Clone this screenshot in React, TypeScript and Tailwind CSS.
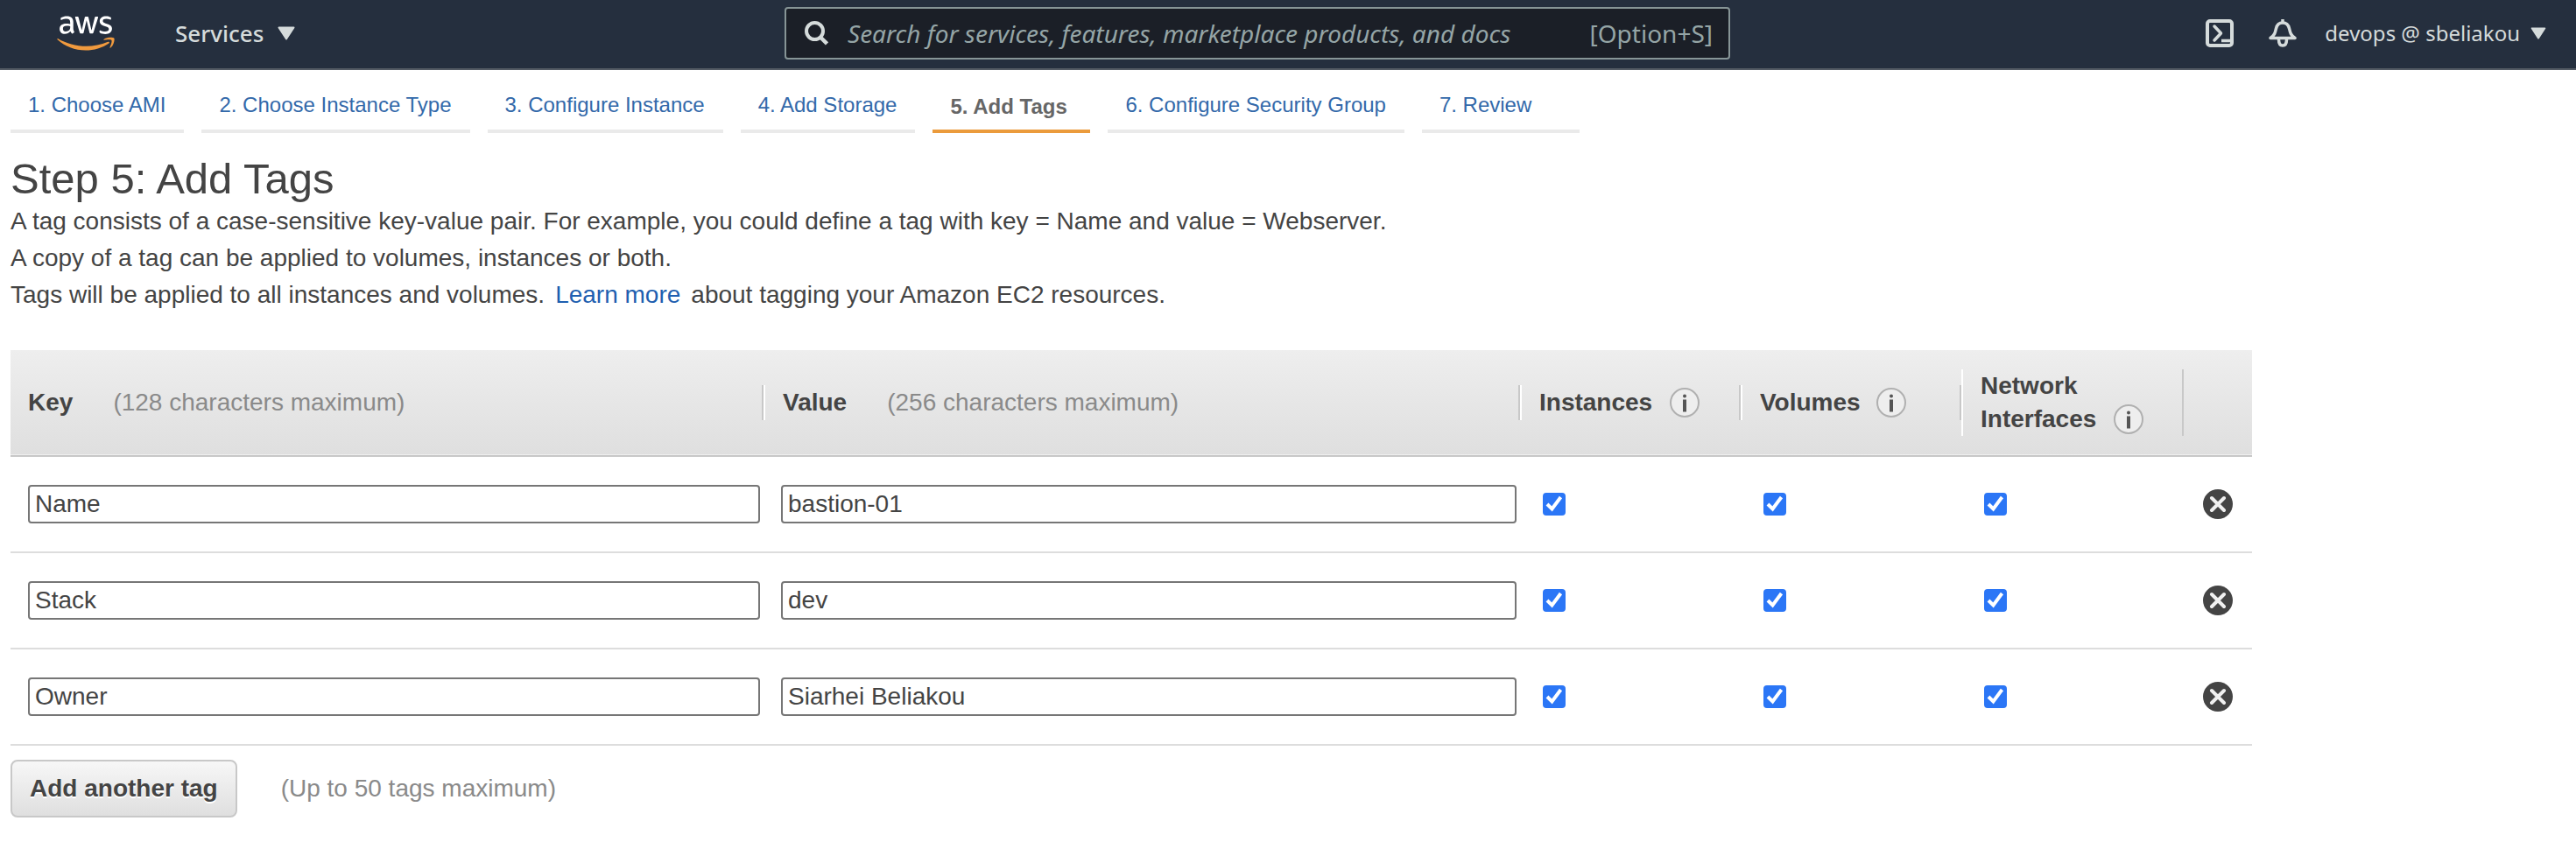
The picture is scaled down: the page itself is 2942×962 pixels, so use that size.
import React from "react";

type Tag = { key: string; value: string };

const steps = [
  "1. Choose AMI",
  "2. Choose Instance Type",
  "3. Configure Instance",
  "4. Add Storage",
  "5. Add Tags",
  "6. Configure Security Group",
  "7. Review",
];
const currentStep = 4;

const tags: Tag[] = [
  { key: "Name", value: "bastion-01" },
  { key: "Stack", value: "dev" },
  { key: "Owner", value: "Siarhei Beliakou" },
];

const targets = ["Instances", "Volumes", "Network Interfaces"];

function AwsLogo() {
  return (
    <svg viewBox="0 0 304 182" className="h-10 w-[66px]" aria-hidden="true">
      <path
        fill="#ffffff"
        d="M86.4 66.4c0 3.7.4 6.700 1.100 8.900.8 2.200 1.800 4.600 3.200 7.200.5.8.7 1.600.7 2.300 0 1-.6 2-1.900 3l-6.300 4.200c-.9.6-1.800.9-2.600.9-1 0-2-.5-3-1.400-1.400-1.500-2.600-3.100-3.600-4.700-1-1.700-2-3.600-3.100-5.900-7.800 9.200-17.600 13.800-29.400 13.800-8.400 0-15.100-2.400-20-7.200-4.900-4.800-7.400-11.200-7.400-19.200 0-8.500 3-15.400 9.100-20.600 6.100-5.200 14.200-7.800 24.500-7.800 3.400 0 6.900.3 10.600.8 3.700.5 7.500 1.300 11.500 2.200v-7.300c0-7.600-1.600-12.900-4.700-16-3.200-3.100-8.600-4.600-16.300-4.600-3.500 0-7.100.4-10.800 1.300-3.700.9-7.300 2-10.800 3.400-1.600.7-2.800 1.100-3.500 1.300-.7.2-1.200.3-1.600.3-1.400 0-2.100-1-2.100-3.100v-4.900c0-1.600.2-2.800.7-3.500.5-.7 1.400-1.400 2.800-2.100 3.500-1.800 7.700-3.300 12.600-4.500C41 1.900 46.200 1.300 51.700 1.300c11.900 0 20.600 2.700 26.200 8.100 5.500 5.400 8.300 13.600 8.300 24.600v32.400zM45.800 81.600c3.300 0 6.700-.6 10.300-1.800 3.600-1.200 6.800-3.400 9.500-6.400 1.600-1.900 2.800-4 3.400-6.400.6-2.400 1-5.300 1-8.700v-4.200c-2.900-.7-6-1.300-9.200-1.700-3.200-.4-6.300-.6-9.400-.6-6.700 0-11.600 1.300-14.900 4-3.300 2.700-4.900 6.500-4.900 11.500 0 4.700 1.200 8.200 3.700 10.600 2.400 2.500 5.900 3.700 10.500 3.700zm80.300 10.800c-1.800 0-3-.3-3.800-1-.8-.6-1.500-2-2.100-3.900L96.700 10.200c-.6-2-.9-3.300-.9-4 0-1.600.8-2.500 2.400-2.500h9.800c1.900 0 3.200.3 3.900 1 .8.6 1.400 2 2 3.900l16.800 66.200 15.600-66.200c.5-2 1.100-3.300 1.900-3.900.8-.6 2.200-1 4-1h8c1.900 0 3.200.3 4 1 .8.6 1.500 2 1.900 3.900l15.800 67 17.300-67c.6-2 1.300-3.300 2-3.900.8-.6 2.100-1 3.900-1h9.300c1.600 0 2.500.8 2.500 2.500 0 .5-.1 1-.2 1.600-.1.6-.3 1.400-.7 2.500l-24.100 77.300c-.6 2-1.300 3.300-2.100 3.900-.8.6-2.100 1-3.800 1h-8.600c-1.900 0-3.200-.3-4-1-.8-.7-1.500-2-1.900-4L156 23l-15.400 64.400c-.5 2-1.100 3.300-1.900 4-.8.7-2.200 1-4 1zm128.500 2.700c-5.200 0-10.400-.6-15.400-1.800-5-1.200-8.900-2.500-11.500-4-1.600-.9-2.700-1.900-3.100-2.800-.4-.9-.6-1.900-.6-2.800v-5.100c0-2.100.8-3.100 2.300-3.100.6 0 1.200.1 1.800.3.600.2 1.500.6 2.500 1 3.400 1.500 7.100 2.700 11 3.500 4 .8 7.900 1.200 11.900 1.200 6.300 0 11.200-1.100 14.600-3.300 3.400-2.200 5.200-5.400 5.200-9.500 0-2.800-.9-5.100-2.700-7-1.800-1.900-5.200-3.600-10.100-5.200L246 52c-7.300-2.300-12.700-5.700-16-10.200-3.300-4.400-5-9.300-5-14.500 0-4.200.9-7.900 2.700-11.100 1.800-3.200 4.200-6 7.200-8.200 3-2.300 6.400-4 10.400-5.200 4-1.200 8.200-1.700 12.600-1.700 2.200 0 4.500.1 6.700.4 2.300.3 4.400.7 6.500 1.100 2 .5 3.900 1 5.700 1.600 1.800.6 3.200 1.200 4.200 1.800 1.400.8 2.400 1.600 3 2.500.6.800.9 1.900.9 3.300v4.700c0 2.100-.8 3.200-2.300 3.200-.8 0-2.100-.4-3.800-1.200-5.700-2.600-12.100-3.900-19.200-3.900-5.700 0-10.200.9-13.300 2.800-3.100 1.900-4.700 4.800-4.700 8.900 0 2.800 1 5.200 3 7.100 2 1.900 5.700 3.800 11 5.500l14.200 4.500c7.200 2.300 12.400 5.500 15.500 9.600 3.100 4.100 4.600 8.800 4.600 14 0 4.300-.9 8.200-2.600 11.600-1.800 3.400-4.200 6.400-7.300 8.800-3.100 2.500-6.800 4.300-11.100 5.600-4.500 1.400-9.200 2.100-14.300 2.100z"
      />
      <g fill="#f09a3e">
        <path d="M273.500 143.700c-32.900 24.300-80.700 37.200-121.800 37.200-57.600 0-109.500-21.300-148.700-56.700-3.100-2.800-.3-6.600 3.400-4.400 42.400 24.600 94.700 39.500 148.800 39.500 36.500 0 76.600-7.600 113.500-23.200 5.500-2.500 10.200 3.600 4.800 7.600z" />
        <path d="M287.200 128.100c-4.200-5.400-27.800-2.600-38.500-1.300-3.200.4-3.700-2.400-.8-4.500 18.800-13.200 49.700-9.400 53.300-5 3.600 4.500-1 35.400-18.600 50.200-2.700 2.300-5.300 1.100-4.100-1.900 4-9.900 12.900-32.200 8.700-37.500z" />
      </g>
    </svg>
  );
}

function Caret({ className }: { className: string }) {
  return (
    <svg viewBox="0 0 20 16" className={className} aria-hidden="true">
      <path d="M1.500 1.500h17L10 14.500z" fill="#d5dbdb" stroke="#d5dbdb" strokeWidth="2" strokeLinejoin="round" />
    </svg>
  );
}

function InfoIcon() {
  return (
    <svg viewBox="0 0 34 34" className="size-[34px] shrink-0" aria-hidden="true">
      <circle cx="17" cy="17" r="16" fill="#eeeeee" stroke="#b0b0b0" strokeWidth="2" />
      <circle cx="17" cy="9.500" r="2" fill="#555555" />
      <path d="M17 13.500v14" stroke="#555555" strokeWidth="4" />
    </svg>
  );
}

function Header() {
  return (
    <header className="flex h-20 items-center border-b-2 border-[#545b64] bg-[#252f3e] pb-0.5 font-['Noto_Sans',sans-serif] text-[#d5dbdb]">
      <div className="flex flex-1 items-center">
        <a href="#home" aria-label="AWS home" className="ml-[65px]">
          <AwsLogo />
        </a>
        <button type="button" className="ml-[69px] flex items-center gap-4 text-[26px] leading-9 font-medium">
          Services
          <Caret className="h-4 w-5" />
        </button>
      </div>
      <div className="mr-[70px] flex h-[60px] w-[1080px] items-center rounded border-2 border-[#879596] bg-[#1b1f27] pr-[18px] pl-5">
        <svg viewBox="0 0 28 30" className="h-[30px] w-7" fill="none" stroke="#d5dbdb" aria-hidden="true">
          <circle cx="12.500" cy="12.500" r="9.500" strokeWidth="4" />
          <path d="M19 19.500l7.500 7.500" strokeWidth="4.500" />
        </svg>
        <input
          type="text"
          aria-label="Search"
          placeholder="Search for services, features, marketplace products, and docs"
          className="ml-[22px] min-w-0 flex-1 bg-transparent text-[28px] leading-9 italic outline-none placeholder:text-[#95a5a6] placeholder:opacity-100"
        />
        <span className="text-[28px] leading-9 text-[#95a5a6]">[Option+S]</span>
      </div>
      <div className="flex flex-1 items-center justify-end">
        <button type="button" aria-label="CloudShell">
          <svg viewBox="0 0 32 32" className="size-8" fill="none" stroke="#d5dbdb" strokeWidth="4" aria-hidden="true">
            <rect x="2" y="2" width="28" height="28" rx="3" />
            <path d="M10 8l7.500 8-7.500 8" strokeLinecap="round" strokeLinejoin="round" strokeWidth="3.500" />
            <path d="M18 24.500h11" strokeWidth="3.500" />
          </svg>
        </button>
        <button type="button" aria-label="Notifications" className="ml-10">
          <svg viewBox="0 0 32 32" className="size-8" fill="none" stroke="#d5dbdb" strokeWidth="3.500" aria-hidden="true">
            <path d="M2 21.500C7 18 7.500 15 8.500 10.500C9.500 6 12 4 16 4s6.500 2 7.500 6.500C24.500 15 25 18 30 21.500z" strokeLinejoin="round" />
            <path d="M16 0v4" />
            <path d="M11.500 23c0 4 1.500 7 4.500 7s4.500-3 4.500-7" />
          </svg>
        </button>
        <button type="button" className="mr-[34px] ml-8 flex items-center gap-3 text-2xl">
          devops @ sbeliakou
          <Caret className="h-[14px] w-[18px]" />
        </button>
      </div>
    </header>
  );
}

function Steps() {
  return (
    <nav aria-label="Launch steps" className="flex gap-5 px-3 pt-5 text-2xl">
      {steps.map((step, i) =>
        i === currentStep ? (
          <a key={step} href={`#step-${i + 1}`} aria-current="step" className="h-[52px] min-w-[180px] border-b-4 border-[#eb9b3c] pt-1.5 pr-[21px] pl-5 font-bold text-[#666666]">
            {step}
          </a>
        ) : (
          <a key={step} href={`#step-${i + 1}`} className="h-[52px] min-w-[180px] border-b-4 border-[#eaeaea] pt-1 pr-[21px] pl-5 text-[#3369aa]">
            {step}
          </a>
        ),
      )}
    </nav>
  );
}

function TagTable() {
  return (
    <table className="mt-[42px] w-[2560px] table-fixed border-collapse">
      <colgroup>
        <col className="w-[860px]" />
        <col className="w-[864px]" />
        <col className="w-[252px]" />
        <col className="w-[252px]" />
        <col className="w-[254px]" />
        <col />
      </colgroup>
      <thead>
        <tr className="h-[121px] border-b-2 border-[#c8c8c8] bg-linear-to-b from-[#eeeeee] to-[#dfdfdf] text-left">
          <th scope="col" className="p-0">
            <div className="flex h-10 items-center border-r-2 border-r-[#c8c8c8] pl-5">
              Key
              <span className="ml-[46px] font-normal text-[#8a8a8a]">(128 characters maximum)</span>
            </div>
          </th>
          <th scope="col" className="p-0">
            <div className="flex h-10 items-center border-x-2 border-r-[#c8c8c8] border-l-white pl-5">
              Value
              <span className="ml-[46px] font-normal text-[#8a8a8a]">(256 characters maximum)</span>
            </div>
          </th>
          <th scope="col" className="p-0">
            <div className="flex h-10 items-center gap-5 border-x-2 border-r-[#c8c8c8] border-l-white pl-5">
              Instances <InfoIcon />
            </div>
          </th>
          <th scope="col" className="p-0">
            <div className="flex h-10 items-center gap-[18px] border-x-2 border-r-[#c8c8c8] border-l-white pl-5">
              Volumes <InfoIcon />
            </div>
          </th>
          <th scope="col" className="p-0">
            <div className="flex h-[76px] flex-col border-x-2 border-r-[#c8c8c8] border-l-white pl-5 leading-[38px]">
              Network
              <span className="flex items-center gap-5">
                Interfaces <InfoIcon />
              </span>
            </div>
          </th>
          <th scope="col" aria-label="Remove" className="p-0" />
        </tr>
      </thead>
      <tbody>
        {tags.map((tag) => (
          <tr key={tag.key} className="h-[110px] border-b-2 border-[#dddddd]">
            <td className="py-0 pr-1 pl-5">
              <input aria-label="Key" defaultValue={tag.key} className="block h-11 w-full rounded border-2 border-[#767676] bg-white px-1.5" />
            </td>
            <td className="py-0 pr-1 pl-5">
              <input aria-label="Value" defaultValue={tag.value} className="block h-11 w-full rounded border-2 border-[#767676] bg-white px-1.5" />
            </td>
            {targets.map((target) => (
              <td key={target} className="py-0 pl-[26px]">
                <span className="grid size-[26px]">
                  <input
                    type="checkbox"
                    defaultChecked
                    aria-label={`${target}: ${tag.key}`}
                    className="peer col-start-1 row-start-1 size-[26px] appearance-none rounded border-2 border-[#767676] checked:border-[#2b76f6] checked:bg-[#2b76f6]"
                  />
                  <svg viewBox="0 0 26 26" className="pointer-events-none invisible col-start-1 row-start-1 size-[26px] peer-checked:visible" fill="none" stroke="#ffffff" strokeWidth="4" aria-hidden="true">
                    <path d="M5 13l5.500 5.500L20.500 5" />
                  </svg>
                </span>
              </td>
            ))}
            <td className="py-0 pl-[22px]">
              <button type="button" aria-label={`Remove ${tag.key}`} className="block">
                <svg viewBox="0 0 34 34" className="size-[34px]" aria-hidden="true">
                  <circle cx="17" cy="17" r="17" fill="#444444" />
                  <path d="M10 10l14 14M24 10l-14 14" stroke="#f0f0f0" strokeWidth="4" strokeLinecap="round" />
                </svg>
              </button>
            </td>
          </tr>
        ))}
      </tbody>
    </table>
  );
}

export default function App() {
  return (
    <div className="min-h-screen bg-white font-['Liberation_Sans',Arial,sans-serif] text-[28px] leading-[42px] text-[#444444]">
      <Header />
      <Steps />
      <main className="px-3 pt-6">
        <h1 className="text-[49px] leading-14">Step 5: Add Tags</h1>
        <p>A tag consists of a case-sensitive key-value pair. For example, you could define a tag with key = Name and value = Webserver.</p>
        <p>A copy of a tag can be applied to volumes, instances or both.</p>
        <p>
          Tags will be applied to all instances and volumes.
          <a href="#learn-more" className="mx-3 text-[#1f5fb0]">Learn more</a>
          about tagging your Amazon EC2 resources.
        </p>
        <TagTable />
        <div className="mt-4 flex items-center gap-[50px]">
          <button type="button" className="h-[66px] rounded-lg border-2 border-[#c8c8c8] bg-linear-to-b from-[#f7f7f7] to-[#dfdfdf] px-5 font-bold text-shadow-[0_2px_0_#ffffff]">
            Add another tag
          </button>
          <span className="text-[#8a8a8a]">(Up to 50 tags maximum)</span>
        </div>
      </main>
    </div>
  );
}
